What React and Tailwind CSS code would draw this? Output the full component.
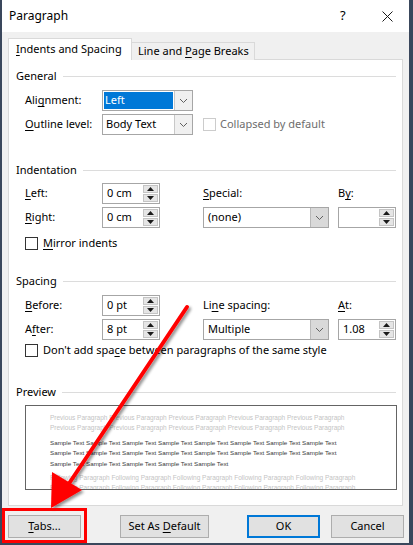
import React from 'react'

const U = ({ children }) => <span className="underline decoration-1 underline-offset-[2px]">{children}</span>

function Chevron() {
  return (
    <svg width="9" height="6" viewBox="0 0 9 6">
      <path d="M1 1 L4.5 4.5 L8 1" fill="none" stroke="#606060" strokeWidth="1" />
    </svg>
  )
}

function Combo({ className, dropClass, children }) {
  return (
    <div className={`flex h-[21px] border border-[#a6a6a6] bg-white ${className}`}>
      <div className="flex-1 flex items-center px-[1px]">{children}</div>
      <div className={`w-[18px] flex items-center justify-center border-l ${dropClass}`}>
        <Chevron />
      </div>
    </div>
  )
}

function Spinner({ value }) {
  return (
    <div className="flex h-[21px] w-[58px] border border-[#a6a6a6] bg-white">
      <div className="flex-1 flex items-center pl-[4px]">{value}</div>
      <div className="w-[16px] flex flex-col gap-[1px] py-[1px] pr-[1px]">
        <div className="flex-1 flex items-center justify-center bg-[#e5e5e5] border border-[#c4c4c4]">
          <svg width="7" height="4" viewBox="0 0 7 4"><path d="M0 4 L3.5 0 L7 4 Z" fill="#1a1a1a" /></svg>
        </div>
        <div className="flex-1 flex items-center justify-center bg-[#e5e5e5] border border-[#c4c4c4]">
          <svg width="7" height="4" viewBox="0 0 7 4"><path d="M0 0 L3.5 4 L7 0 Z" fill="#1a1a1a" /></svg>
        </div>
      </div>
    </div>
  )
}

function Check({ disabled }) {
  return <div className={`w-[13px] h-[13px] bg-white border ${disabled ? 'border-[#cccccc]' : 'border-[#333333]'}`} />
}

function Group({ title, className, children }) {
  return (
    <div className={className}>
      <div className="flex items-center h-[16px] pl-[7px] pr-[6px]">
        <span className="mr-[6px]">{title}</span>
        <div className="flex-1 h-px bg-[#dcdcdc]" />
      </div>
      {children}
    </div>
  )
}

function Btn({ className, children }) {
  return (
    <div className={`h-[23px] flex items-center justify-center bg-[#e1e1e1] border ${className}`}><span>{children}</span></div>
  )
}

const prev = 'Previous Paragraph Previous Paragraph Previous Paragraph Previous Paragraph Previous Paragraph'
const foll = 'Following Paragraph Following Paragraph Following Paragraph Following Paragraph Following Paragraph'
const samp = 'Sample Text Sample Text Sample Text Sample Text Sample Text Sample Text Sample Text Sample Text'

export default function App() {
  return (
    <div className="relative w-[413px] h-[545px] bg-[#3a475c] overflow-hidden font-['Noto_Sans',sans-serif] text-[11px] text-[#000000]">
      <div className="ml-[2px] w-[407px] h-[543px] bg-[#f0f0f0] flex flex-col">
        {/* title bar */}
        <div className="h-[32px] bg-white flex items-center pl-[7px]">
          <span className="flex-1 text-[12px]">Paragraph</span>
          <span className="w-[10px] mr-[32px] text-[13px]">?</span>
          <svg width="11" height="11" viewBox="0 0 11 11" className="mr-[16px]">
            <path d="M0.5 0.5 L10.5 10.5 M10.5 0.5 L0.5 10.5" stroke="#1a1a1a" strokeWidth="1" />
          </svg>
        </div>

        {/* tabs */}
        <div className="flex items-end h-[22px] mt-[6px] pl-[6px] relative z-10 whitespace-nowrap">
          <div className="h-[22px] w-[124px] bg-white border border-b-0 border-[#d9d9d9] flex items-center pl-[7px] pb-px">
            <span><U>I</U>ndents and Spacing</span>
          </div>
          <div className="h-[18px] w-[123px] bg-[#f0f0f0] border border-l-0 border-b-0 border-[#d9d9d9] flex items-center pl-[6px]">
            <span>Line and <U>P</U>age Breaks</span>
          </div>
        </div>

        {/* panel */}
        <div className="mx-[6px] -mt-px h-[447px] bg-white border border-[#d9d9d9] pt-[8px] whitespace-nowrap">
          <Group title="General">
            <div className="flex items-center mt-[6px] pl-[16px] h-[21px]">
              <span className="w-[77px]">Ali<U>g</U>nment:</span>
              <Combo className="w-[91px]" dropClass="border-[#c8c8c8] bg-[#f0f0f0]">
                <span className="bg-[#0078d7] text-white w-full h-[17px] flex items-center pl-[1px]">Left</span>
              </Combo>
            </div>
            <div className="flex items-center mt-[3px] pl-[16px] h-[21px]">
              <span className="w-[77px]"><U>O</U>utline level:</span>
              <Combo className="w-[91px]" dropClass="border-[#c8c8c8] bg-[#f0f0f0]">
                <span className="pl-[2px]">Body Text</span>
              </Combo>
              <div className="ml-[10px]"><Check disabled /></div>
              <span className="ml-[4px] text-[#6d6d6d]">Collapsed by default</span>
            </div>
          </Group>

          <Group title="Indentation" className="mt-[27px]">
            <div className="flex items-center mt-[5px] pl-[16px] h-[21px]">
              <span className="w-[77px]"><U>L</U>eft:</span>
              <Spinner value="0 cm" />
              <span className="ml-[43px] w-[135px]"><U>S</U>pecial:</span>
              <span>B<U>y</U>:</span>
            </div>
            <div className="flex items-center mt-[3px] pl-[16px] h-[21px]">
              <span className="w-[77px]"><U>R</U>ight:</span>
              <Spinner value="0 cm" />
              <Combo className="ml-[43px] w-[126px]" dropClass="border-[#b8b8b8] bg-[#d9d9d9]">
                <span className="pl-[3px]">(none)</span>
              </Combo>
              <div className="ml-[9px]"><Spinner value="" /></div>
            </div>
            <div className="flex items-center mt-[7px] pl-[16px] h-[16px]">
              <Check />
              <span className="ml-[5px]"><U>M</U>irror indents</span>
            </div>
          </Group>

          <Group title="Spacing" className="mt-[22px]">
            <div className="flex items-center mt-[6px] pl-[16px] h-[21px]">
              <span className="w-[77px]"><U>B</U>efore:</span>
              <Spinner value="0 pt" />
              <span className="ml-[43px] w-[135px]">Li<U>n</U>e spacing:</span>
              <span><U>A</U>t:</span>
            </div>
            <div className="flex items-center mt-[3px] pl-[16px] h-[21px]">
              <span className="w-[77px]">A<U>f</U>ter:</span>
              <Spinner value="8 pt" />
              <Combo className="ml-[43px] w-[126px]" dropClass="border-[#b8b8b8] bg-[#d9d9d9]">
                <span className="pl-[3px]">Multiple</span>
              </Combo>
              <div className="ml-[9px]"><Spinner value="1.08" /></div>
            </div>
            <div className="flex items-center mt-[2px] pl-[16px] h-[16px]">
              <Check />
              <span className="ml-[5px]">Don't add spa<U>c</U>e between paragraphs of the same style</span>
            </div>
          </Group>

          <Group title="Preview" className="mt-[26px]">
            <div className="mt-[5px] ml-[16px] w-[372px] h-[85px] border border-[#646464] overflow-hidden pl-[24px] pt-[7px] font-['Liberation_Sans',sans-serif] text-[6.5px] leading-[10px]">
              <div className="text-[#c4c4c4]">{prev}</div>
              <div className="text-[#c4c4c4]">{prev}</div>
              <div className="text-[#3a3a3a] text-[6.25px] mt-[5px]">{samp}</div>
              <div className="text-[#3a3a3a] text-[6.25px] leading-[10.5px]">{samp}</div>
              <div className="text-[#3a3a3a] text-[6.25px] leading-[10.5px]">Sample Text Sample Text Sample Text Sample Text Sample Text</div>
              <div className="text-[#c4c4c4] mt-[4px]">{foll}</div>
              <div className="text-[#c4c4c4]">{foll}</div>
            </div>
          </Group>
        </div>

        {/* buttons */}
        <div className="flex items-center mt-[9px] pl-[6px] whitespace-nowrap">
          <Btn className="w-[73px] border-[#adadad]"><U>T</U>abs...</Btn>
          <Btn className="ml-[39px] w-[89px] border-[#adadad]">Set As <U>D</U>efault</Btn>
          <Btn className="ml-[38px] w-[73px] border-2 border-[#0078d7]">OK</Btn>
          <Btn className="ml-[11px] w-[73px] border-[#adadad]">Cancel</Btn>
        </div>
      </div>

      {/* annotation overlay */}
      <svg className="absolute inset-0 pointer-events-none" width="413" height="545" viewBox="0 0 413 545">
        <defs>
          <filter id="sh" x="-20%" y="-20%" width="140%" height="140%">
            <feGaussianBlur in="SourceAlpha" stdDeviation="1.5" />
            <feOffset dx="2" dy="2" result="b" />
            <feComponentTransfer><feFuncA type="linear" slope="0.45" /></feComponentTransfer>
            <feMerge><feMergeNode /><feMergeNode in="SourceGraphic" /></feMerge>
          </filter>
        </defs>
        <g filter="url(#sh)">
          <path d="M187 307 L66 488" stroke="#ff0000" strokeWidth="4" strokeLinecap="round" />
          <path d="M51 508 L52 472 L82 490 Z" fill="#ff0000" />
        </g>
        <rect x="3.5" y="509.5" width="82" height="32" fill="none" stroke="#ff0000" strokeWidth="3" />
      </svg>
    </div>
  )
}
